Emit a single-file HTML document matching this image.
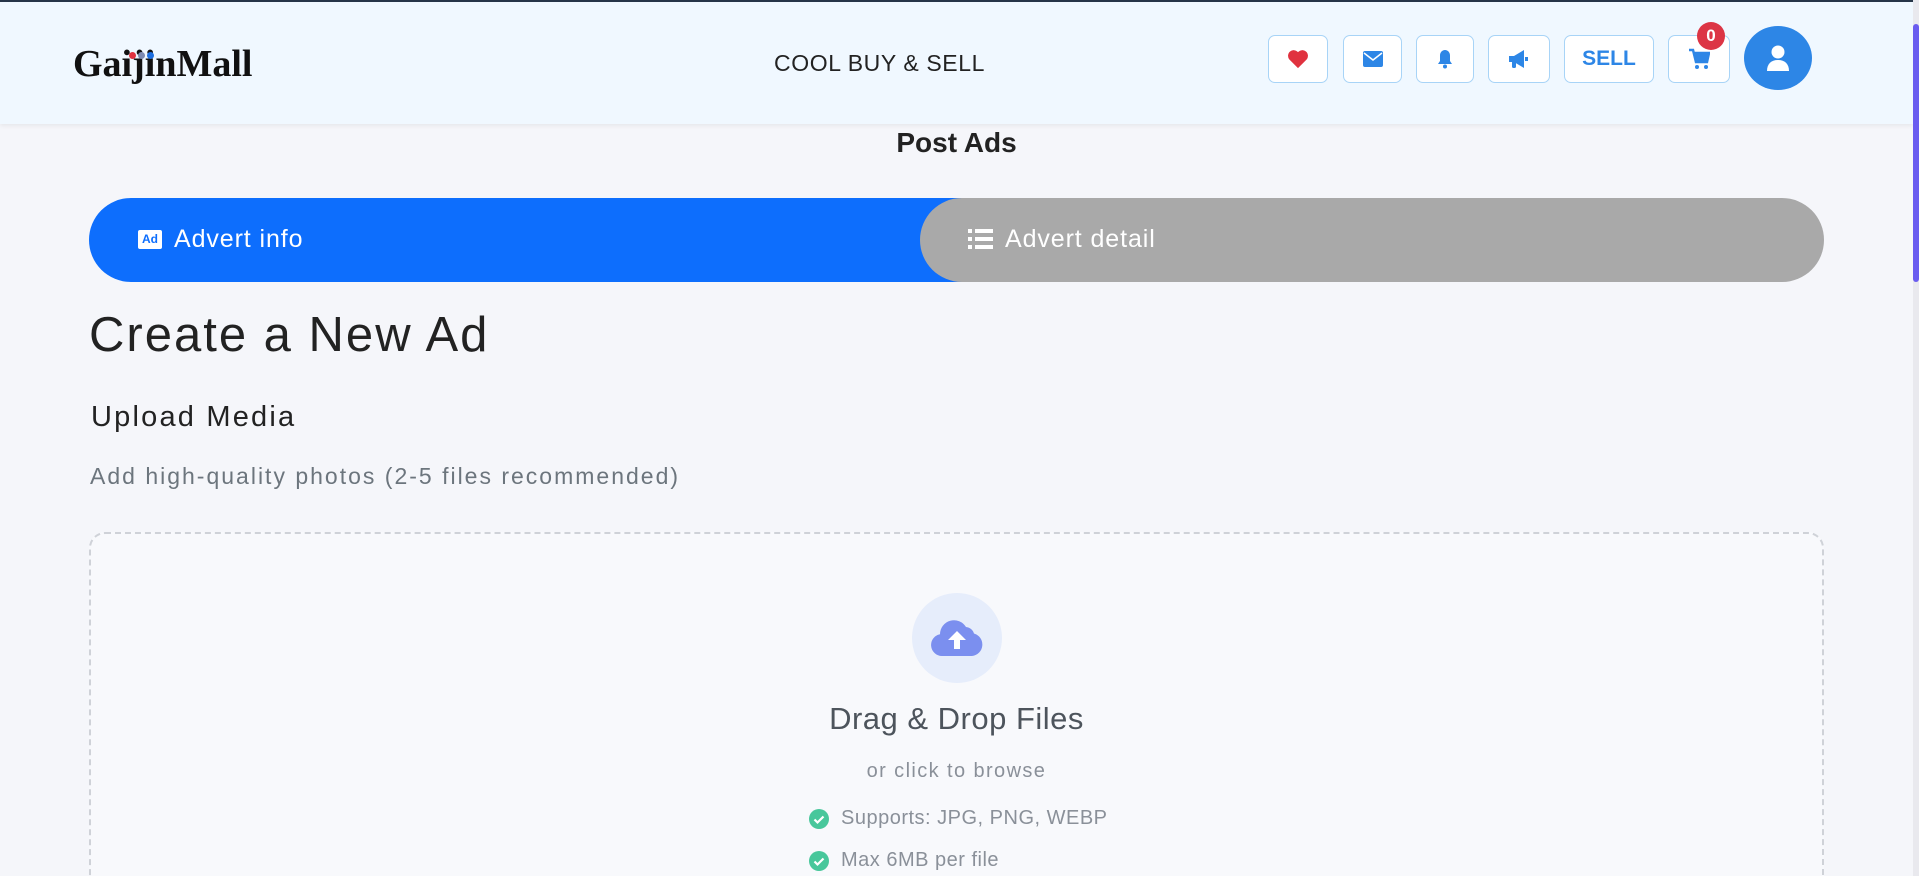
<!DOCTYPE html>
<html><head><meta charset="utf-8"><style>
*{box-sizing:border-box;margin:0;padding:0}
html{width:1919px;height:876px;overflow:hidden}
body{width:1919px;height:876px;overflow:hidden;background:#f5f6fa;font-family:"Liberation Sans",sans-serif;position:relative;color:#212529}
.wrap{position:absolute;left:0;top:0;width:1919px;height:876px;overflow:hidden}
.hdr{position:absolute;left:0;top:0;width:1913px;height:124px;background:#f0f8ff;border-top:2px solid #263548;box-shadow:0 2px 4px rgba(0,0,0,.06)}
.logo{position:absolute;left:73px;top:40px;font-family:"Liberation Serif",serif;font-weight:bold;font-size:38px;color:#111}
.dots{position:absolute;left:129px;top:44px}
.dots i{display:inline-block;width:7px;height:7px;border-radius:50%;margin-right:2px}
.tag{position:absolute;left:774px;top:48px;font-size:23px;color:#222;letter-spacing:.6px}
.btn{position:absolute;top:33px;height:48px;background:#fff;border:1px solid #a8d4f7;border-radius:7px;display:flex;align-items:center;justify-content:center;color:#2d86e6}
.sb{position:absolute;right:0;top:0;width:6px;height:876px;background:#e9e9ee}
.sb i{position:absolute;left:0;top:24px;width:6px;height:258px;background:#6a5cf0;border-radius:3px}
.abs{position:absolute}
</style></head><body><div class="wrap">
<div class="hdr">
<div class="logo">GaijinMall</div>
<div class="dots"><i style="background:#e0323f"></i><i style="background:#7d8ab0"></i><i style="background:#1e6fe0"></i></div>
<div class="tag">COOL BUY &amp; SELL</div>
<div class="btn" style="left:1268px;width:60px"><svg width="22" height="20" viewBox="0 0 24 22"><path d="M12 21L2.5 11.5A5.5 5.5 0 0 1 12 3.5a5.5 5.5 0 0 1 9.5 8z" fill="#e0323f"/></svg></div>
<div class="btn" style="left:1343px;width:59px"><svg width="20" height="16" viewBox="0 0 20 16"><rect width="20" height="16" rx="2" fill="#2d86e6"/><path d="M1 2l9 7 9-7" stroke="#fff" stroke-width="1.5" fill="none"/></svg></div>
<div class="btn" style="left:1416px;width:58px"><svg width="16" height="20" viewBox="0 0 16 20"><path d="M8 1c-3 0-5 2.5-5 5.5V12L1 15h14l-2-3V6.5C13 3.5 11 1 8 1z" fill="#2d86e6"/><circle cx="8" cy="17.5" r="2" fill="#2d86e6"/></svg></div>
<div class="btn" style="left:1488px;width:62px"><svg width="22" height="20" viewBox="0 0 22 20"><path d="M1 7h5l10-6v18L6 13H1z" fill="#2d86e6"/><rect x="4" y="12" width="4" height="7" rx="1.5" fill="#2d86e6"/><rect x="17" y="8" width="3" height="4" fill="#2d86e6"/></svg></div>
<div class="btn" style="left:1564px;width:90px;font-size:21px;font-weight:bold">SELL</div>
<div class="btn" style="left:1668px;width:62px"><svg width="22" height="22" viewBox="0 0 22 22"><path d="M1 2h4l3 12h11l2-9H6" stroke="#2d86e6" stroke-width="2.5" fill="none"/><path d="M7 5h14l-2 9H8z" fill="#2d86e6"/><circle cx="9" cy="19" r="2" fill="#2d86e6"/><circle cx="18" cy="19" r="2" fill="#2d86e6"/></svg></div>
<div class="abs" style="left:1697px;top:20px;width:28px;height:28px;border-radius:50%;background:#dc3545;color:#fff;font-weight:bold;font-size:17px;text-align:center;line-height:28px">0</div>
<div class="abs" style="left:1744px;top:24px;width:68px;height:64px;border-radius:50%;background:#2d86e6;display:flex;align-items:center;justify-content:center"><svg width="24" height="28" viewBox="0 0 24 28"><circle cx="12" cy="8" r="6.5" fill="#fff"/><path d="M1 27c0-7 4-11 11-11s11 4 11 11z" fill="#fff"/></svg></div>
</div>
<div class="sb"><i></i></div>
<div class="abs" style="left:0;width:1913px;top:127px;text-align:center;font-size:28px;font-weight:bold;color:#222">Post Ads</div>
<div class="abs" style="left:89px;top:198px;width:880px;height:84px;background:#0d6efd;border-radius:42px 0 0 42px"></div>
<div class="abs" style="left:920px;top:198px;width:904px;height:84px;background:#a9a9a9;border-radius:42px"></div>
<div class="abs" style="left:138px;top:230px;width:24px;height:19px;background:#fff;border-radius:2px;color:#0d6efd;font-size:12px;font-weight:bold;text-align:center;line-height:19px">Ad</div>
<div class="abs" style="left:174px;top:225px;font-size:25px;color:#fff;letter-spacing:.9px">Advert info</div>
<div class="abs" style="left:968px;top:229px"><svg width="25" height="20" viewBox="0 0 25 20"><g fill="#fff"><rect x="0" y="0" width="4" height="4"/><rect x="0" y="8" width="4" height="4"/><rect x="0" y="16" width="4" height="4"/><rect x="7" y="0" width="18" height="4"/><rect x="7" y="8" width="18" height="4"/><rect x="7" y="16" width="18" height="4"/></g></svg></div>
<div class="abs" style="left:1005px;top:225px;font-size:25px;color:#fff;letter-spacing:.9px">Advert detail</div>
<div class="abs" style="left:89px;top:307px;font-size:49px;color:#222;letter-spacing:2px">Create a New Ad</div>
<div class="abs" style="left:91px;top:401px;font-size:29px;color:#222;letter-spacing:2.2px">Upload Media</div>
<div class="abs" style="left:90px;top:463px;font-size:23px;color:#6c757d;letter-spacing:2px">Add high-quality photos (2-5 files recommended)</div>
<div class="abs" style="left:89px;top:532px;width:1735px;height:380px;border:2px dashed #cfd2d8;border-radius:16px;background:#f8f9fc"></div>
<div class="abs" style="left:912px;top:593px;width:90px;height:90px;border-radius:50%;background:#e6edfb;display:flex;align-items:center;justify-content:center"><svg width="54" height="38" viewBox="0 0 54 38"><path d="M12 37a11 11 0 0 1-2-21.8A14 14 0 0 1 36 8a9 9 0 0 1 8 6.5A11.5 11.5 0 0 1 42 37z" fill="#7b8fef"/><path d="M27 12l-9 9h6v9h6v-9h6z" fill="#fff"/></svg></div>
<div class="abs" style="left:0;width:1913px;top:701px;text-align:center;font-size:31px;color:#4d545c;letter-spacing:.5px">Drag &amp; Drop Files</div>
<div class="abs" style="left:0;width:1913px;top:760px;text-align:center;font-size:20px;color:#8a9099;letter-spacing:1.4px">or click to browse</div>
<div class="abs" style="left:809px;top:809px;width:20px;height:20px;border-radius:50%;background:#48c79b"><svg width="20" height="20"><path d="M5.5 10.5l3 3 6-6" stroke="#fff" stroke-width="2.2" fill="none"/></svg></div>
<div class="abs" style="left:841px;top:807px;font-size:20px;color:#8a9099;letter-spacing:.5px">Supports: JPG, PNG, WEBP</div>
<div class="abs" style="left:809px;top:851px;width:20px;height:20px;border-radius:50%;background:#48c79b"><svg width="20" height="20"><path d="M5.5 10.5l3 3 6-6" stroke="#fff" stroke-width="2.2" fill="none"/></svg></div>
<div class="abs" style="left:841px;top:849px;font-size:20px;color:#8a9099;letter-spacing:.5px">Max 6MB per file</div>
</div></body></html>
